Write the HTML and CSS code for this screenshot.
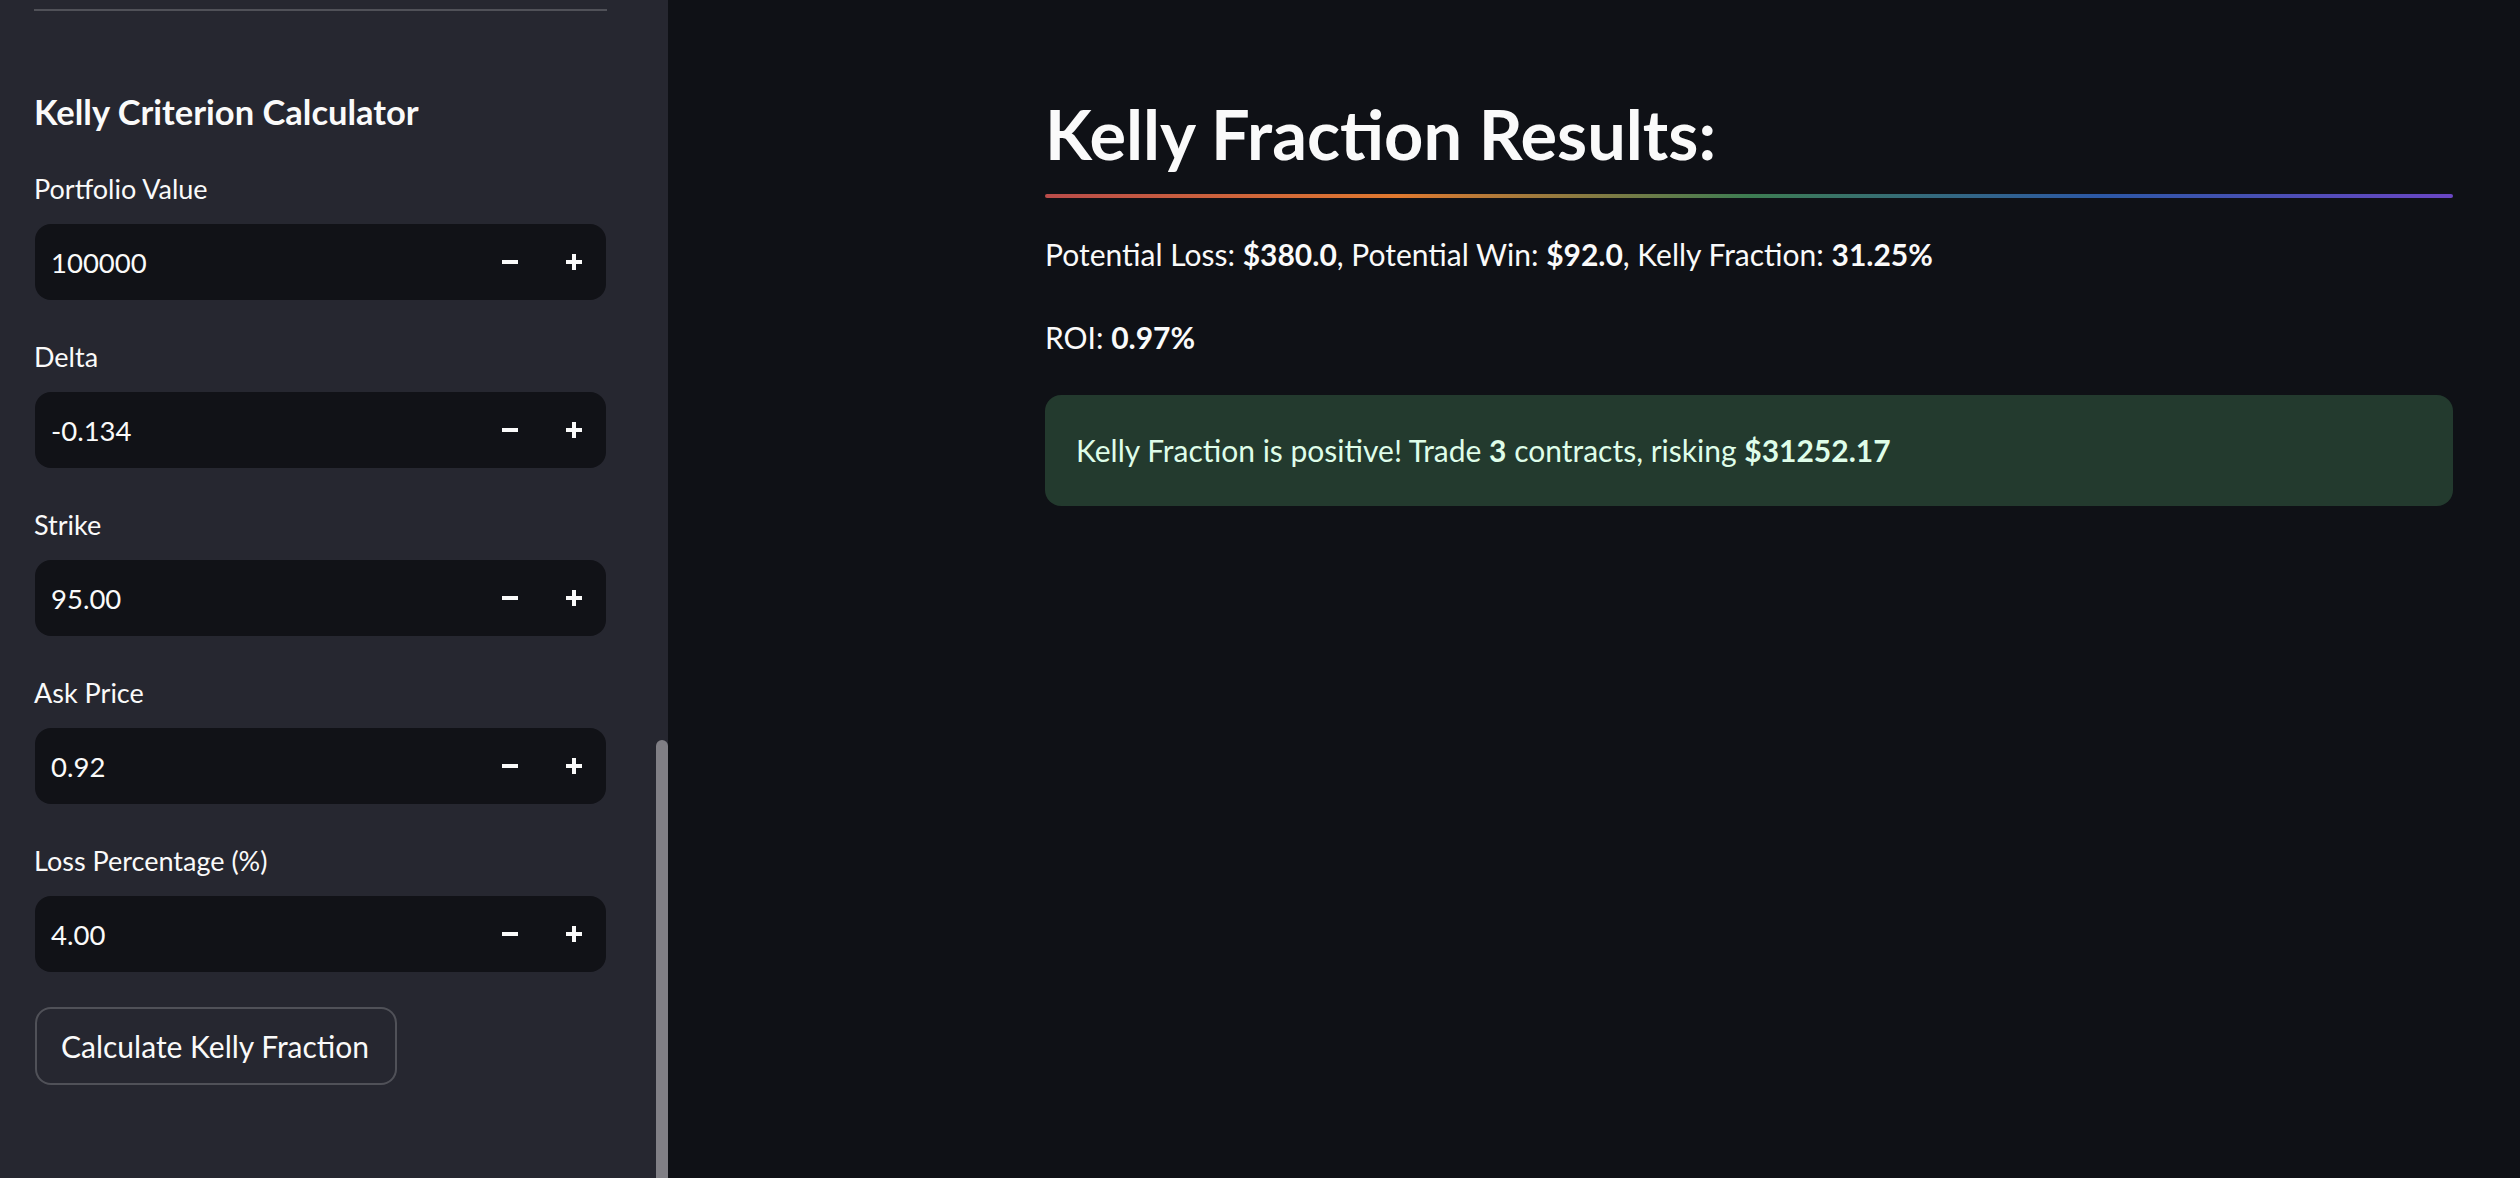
FILE: index.html
```html
<!DOCTYPE html>
<html lang="en">
<head>
<meta charset="utf-8">
<title>Kelly Criterion Calculator</title>
<link rel="stylesheet" href="styles.css">
</head>
<body>
<div class="app">
  <aside class="sidebar">
    <div class="sidebar-inner">
      <hr class="side-rule">
      <h3 class="side-title">Kelly Criterion Calculator</h3>

      <div class="field">
        <label class="field-label">Portfolio Value</label>
        <div class="num-input">
          <span class="num-value">100000</span>
          <button class="step" aria-label="decrement"><svg width="16" height="16" viewBox="0 0 16 16"><rect x="0" y="6" width="16" height="4" fill="#fafafa"/></svg></button>
          <button class="step" aria-label="increment"><svg width="16" height="16" viewBox="0 0 16 16"><rect x="0" y="6" width="16" height="4" fill="#fafafa"/><rect x="6" y="0" width="4" height="16" fill="#fafafa"/></svg></button>
        </div>
      </div>

      <div class="field">
        <label class="field-label">Delta</label>
        <div class="num-input">
          <span class="num-value">-0.134</span>
          <button class="step" aria-label="decrement"><svg width="16" height="16" viewBox="0 0 16 16"><rect x="0" y="6" width="16" height="4" fill="#fafafa"/></svg></button>
          <button class="step" aria-label="increment"><svg width="16" height="16" viewBox="0 0 16 16"><rect x="0" y="6" width="16" height="4" fill="#fafafa"/><rect x="6" y="0" width="4" height="16" fill="#fafafa"/></svg></button>
        </div>
      </div>

      <div class="field">
        <label class="field-label">Strike</label>
        <div class="num-input">
          <span class="num-value">95.00</span>
          <button class="step" aria-label="decrement"><svg width="16" height="16" viewBox="0 0 16 16"><rect x="0" y="6" width="16" height="4" fill="#fafafa"/></svg></button>
          <button class="step" aria-label="increment"><svg width="16" height="16" viewBox="0 0 16 16"><rect x="0" y="6" width="16" height="4" fill="#fafafa"/><rect x="6" y="0" width="4" height="16" fill="#fafafa"/></svg></button>
        </div>
      </div>

      <div class="field">
        <label class="field-label">Ask Price</label>
        <div class="num-input">
          <span class="num-value">0.92</span>
          <button class="step" aria-label="decrement"><svg width="16" height="16" viewBox="0 0 16 16"><rect x="0" y="6" width="16" height="4" fill="#fafafa"/></svg></button>
          <button class="step" aria-label="increment"><svg width="16" height="16" viewBox="0 0 16 16"><rect x="0" y="6" width="16" height="4" fill="#fafafa"/><rect x="6" y="0" width="4" height="16" fill="#fafafa"/></svg></button>
        </div>
      </div>

      <div class="field field-last">
        <label class="field-label">Loss Percentage (%)</label>
        <div class="num-input">
          <span class="num-value">4.00</span>
          <button class="step" aria-label="decrement"><svg width="16" height="16" viewBox="0 0 16 16"><rect x="0" y="6" width="16" height="4" fill="#fafafa"/></svg></button>
          <button class="step" aria-label="increment"><svg width="16" height="16" viewBox="0 0 16 16"><rect x="0" y="6" width="16" height="4" fill="#fafafa"/><rect x="6" y="0" width="4" height="16" fill="#fafafa"/></svg></button>
        </div>
      </div>

      <button class="calc-btn">Calculate Kelly Fraction</button>
    </div>
    <div class="scroll-thumb"></div>
  </aside>

  <main class="main">
    <div class="block">
      <h2 class="title">Kelly Fraction Results:</h2>
      <hr class="rainbow">
      <p class="para">Potential Loss: <strong>$380.0</strong>, Potential Win: <strong>$92.0</strong>, Kelly Fraction: <strong>31.25%</strong></p>
      <p class="para">ROI: <strong>0.97%</strong></p>
      <div class="alert">Kelly Fraction is positive! Trade <strong>3</strong> contracts, risking <strong>$31252.17</strong></div>
    </div>
  </main>
</div>
</body>
</html>
```

FILE: styles.css
```css
* {
  box-sizing: border-box;
}

html, body {
  margin: 0;
  padding: 0;
  height: 100%;
  background: #0f1116;
  color: #fafafa;
  font-family: Lato, "Noto Sans", sans-serif;
}

.app {
  display: flex;
  width: 2520px;
  height: 1178px;
  overflow: hidden;
}

/* ---------- Sidebar ---------- */
.sidebar {
  position: relative;
  flex: 0 0 668px;
  height: 100%;
  background: #262730;
  overflow: hidden;
}

.sidebar-inner {
  padding: 9px 61px 0 34px;
  display: flex;
  flex-direction: column;
}

.side-rule {
  margin: 0;
  border: none;
  height: 2px;
  background: rgba(250, 250, 250, 0.2);
}

.side-title {
  margin: 79px 0 35px;
  font-size: 34.5px;
  line-height: 43px;
  font-weight: 700;
  color: #fafafa;
}

.field {
  display: flex;
  flex-direction: column;
  margin-bottom: 36px;
}

.field-last {
  margin-bottom: 35px;
}

.field-label {
  font-size: 27px;
  line-height: 42px;
  margin-bottom: 14px;
  color: #fafafa;
}

.num-input {
  display: flex;
  align-items: center;
  height: 76px;
  margin: 0 1px;
  background: #111217;
  border-radius: 16px;
}

.num-value {
  flex: 1;
  padding-left: 16px;
  font-size: 27.5px;
  color: #fafafa;
}

.step {
  display: flex;
  align-items: center;
  justify-content: center;
  width: 64px;
  height: 76px;
  padding: 0;
  border: none;
  background: transparent;
  cursor: pointer;
}

.calc-btn {
  align-self: flex-start;
  height: 78px;
  width: 362px;
  margin-left: 1px;
  padding: 0 24px;
  background: #262730;
  border: 2px solid rgba(250, 250, 250, 0.2);
  border-radius: 16px;
  color: #fafafa;
  font-family: Lato, "Noto Sans", sans-serif;
  font-size: 30px;
  text-align: left;
}

.scroll-thumb {
  position: absolute;
  left: 656px;
  top: 740px;
  width: 12px;
  height: 460px;
  border-radius: 6px;
  background: #807f85;
}

/* ---------- Main ---------- */
.main {
  flex: 1;
  height: 100%;
  background: #0f1116;
}

.block {
  padding: 93px 67px 0 377px;
}

.title {
  margin: 0;
  font-size: 68.5px;
  line-height: 82px;
  font-weight: 700;
  color: #fafafa;
}

.rainbow {
  margin: 19px 0 0;
  border: none;
  height: 4px;
  border-radius: 2px;
  background: linear-gradient(to right, #b94c4a 0%, #e0792f 25%, #3d7d52 50%, #2c58a6 75%, #6a46c4 100%);
}

.para {
  margin: 31px 0 0;
  font-size: 30px;
  line-height: 51px;
  color: #fafafa;
}

.para + .para {
  margin-top: 32px;
}

.para strong,
.alert strong {
  font-weight: 700;
}

.alert {
  margin-top: 32px;
  padding: 30px 31px;
  border-radius: 16px;
  background: #233a2e;
  color: #dffde9;
  font-size: 30px;
  line-height: 51px;
}
```
